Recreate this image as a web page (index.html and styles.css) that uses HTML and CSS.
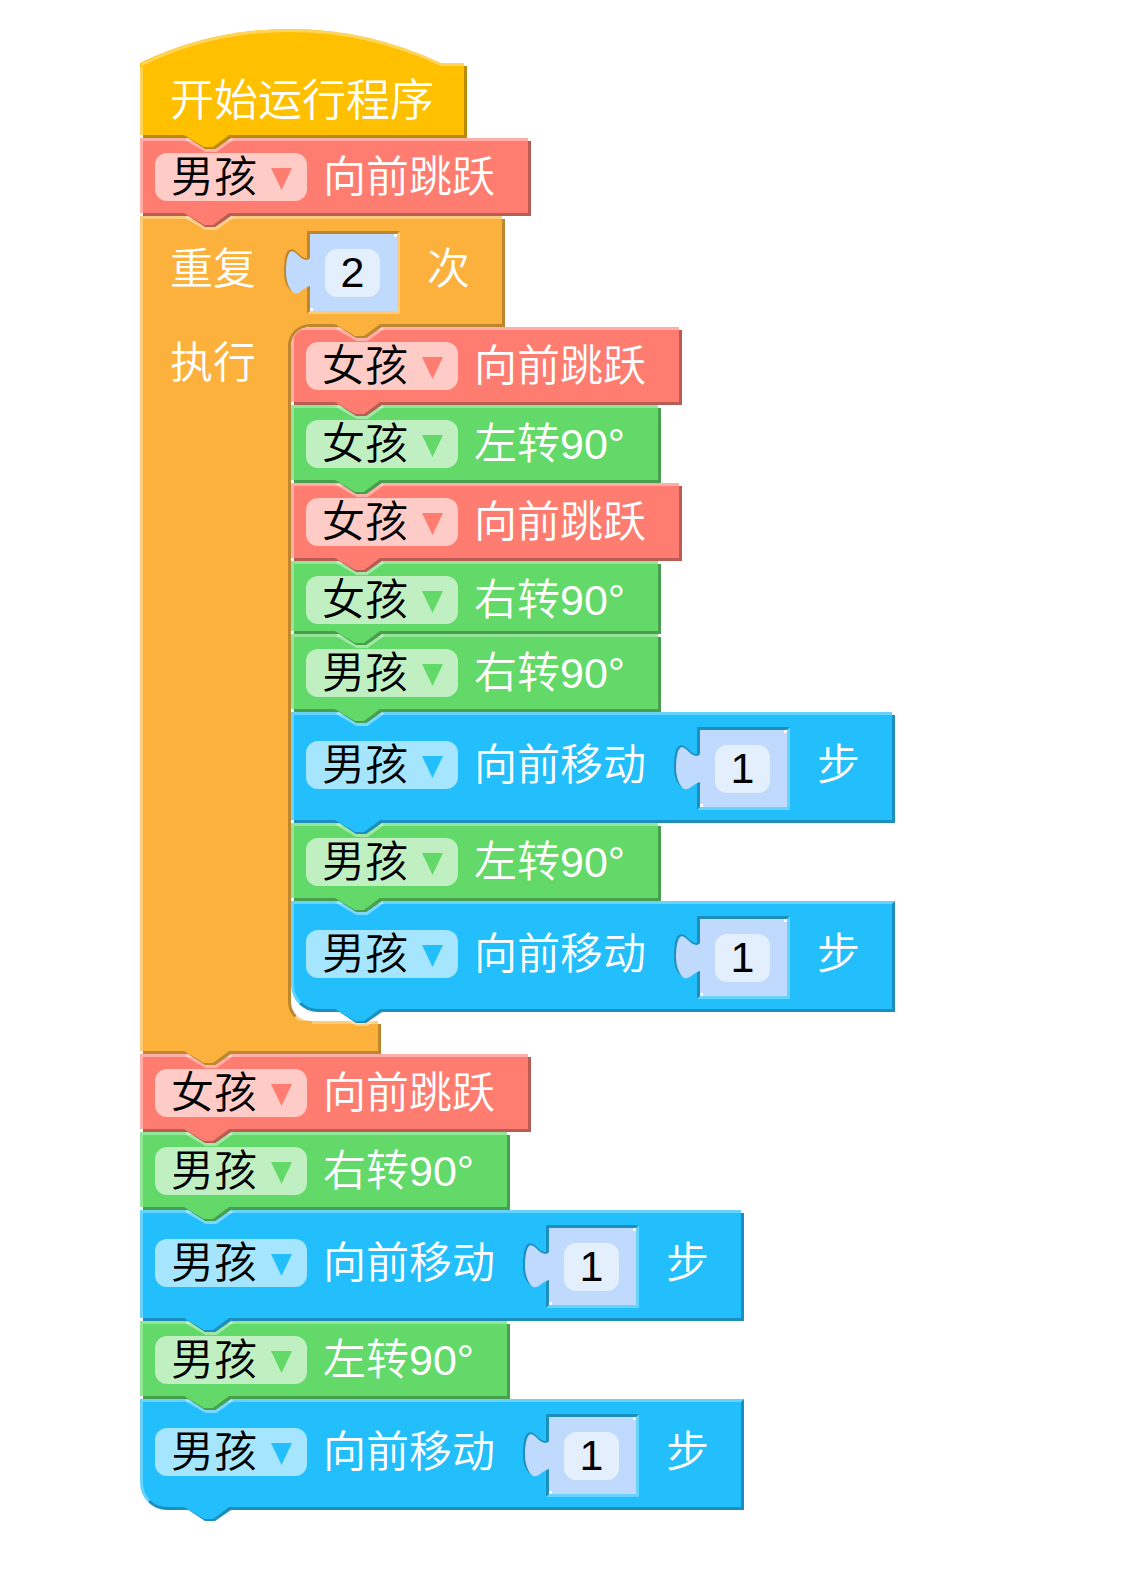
FILE: index.html
```html
<!DOCTYPE html>
<html lang="zh-CN">
<head>
<meta charset="utf-8">
<meta name="viewport" content="width=device-width, initial-scale=1">
<title>积木程序</title>
<link rel="stylesheet" href="styles.css">
</head>
<body>
<svg class="symbols" aria-hidden="true">
  <symbol id="tab" viewBox="0 0 52 20">
    <path d="M2 4 L22 15.500 H32 L48 4" fill="none" stroke="#fff" stroke-opacity=".4" stroke-width="3"/>
    <path d="M3 2 L21 14 H31 L47 3 V0 H3 Z" fill="var(--dark)"/>
    <path d="M0 0 L20 12 H29 L45 0 Z" fill="var(--fill)"/>
  </symbol>
  <symbol id="plug" viewBox="0 0 30 50">
    <path d="M27 10 C24 14 20 12 16 8 C12 4 9 2 6 4 C2 6 1 16 1 26 C1 36 4 42 9 45 L27 38 Z" fill="var(--dark)"/>
    <path d="M30 12 H27 C24 16 19 13 16 10 C12 6 9 4 7 6 C4 9 3 18 3 26 C3 38 8 45 11 47 C16 49 20 42 27 40 H30 Z" fill="#bfdafd"/>
  </symbol>
  <symbol id="arrow" viewBox="0 0 21 22"><path d="M0 0 H21 L10.500 22 Z" fill="var(--fill)"/></symbol>
</svg>

<main class="workspace">
  <div class="stack">
    <div class="hat yellow">
      <svg class="arch" viewBox="0 0 327 38" aria-hidden="true">
        <path d="M0 38 V34 Q70 0 150 0 Q228 0 300 34 V38 Z" fill="var(--fill)"/>
        <path d="M1 36 Q70 1.500 150 1.500 Q228 1.500 301 35.500" fill="none" stroke="var(--light)" stroke-width="3"/>
      </svg>
      <div class="block start"><span class="text">开始运行程序</span><svg class="tab"><use href="#tab"/></svg></div>
    </div>

    <div class="block pink">
      <span class="pick"><select aria-label="角色"><option>男孩</option></select><svg class="arrow"><use href="#arrow"/></svg></span>
      <span class="text">向前跳跃</span><svg class="tab"><use href="#tab"/></svg>
    </div>

    <div class="loop orange">
      <div class="block tall loop-head">
        <label class="text" for="times">重复</label>
        <span class="value"><svg class="plug"><use href="#plug"/></svg><input id="times" value="2"></span>
        <span class="text">次</span>
      </div>
      <div class="loop-body">
        <span class="text loop-do">执行</span>
        <div class="mouth">
          <svg class="tab top-tab"><use href="#tab"/></svg>
          <div class="stack">
            <div class="block pink first">
              <span class="pick"><select aria-label="角色"><option>女孩</option></select><svg class="arrow"><use href="#arrow"/></svg></span>
              <span class="text">向前跳跃</span><svg class="tab"><use href="#tab"/></svg>
            </div>
            <div class="block green">
              <span class="pick"><select aria-label="角色"><option>女孩</option></select><svg class="arrow"><use href="#arrow"/></svg></span>
              <span class="text">左转90°</span><svg class="tab"><use href="#tab"/></svg>
            </div>
            <div class="block pink">
              <span class="pick"><select aria-label="角色"><option>女孩</option></select><svg class="arrow"><use href="#arrow"/></svg></span>
              <span class="text">向前跳跃</span><svg class="tab"><use href="#tab"/></svg>
            </div>
            <div class="block green compact">
              <span class="pick"><select aria-label="角色"><option>女孩</option></select><svg class="arrow"><use href="#arrow"/></svg></span>
              <span class="text">右转90°</span><svg class="tab"><use href="#tab"/></svg>
            </div>
            <div class="block green">
              <span class="pick"><select aria-label="角色"><option>男孩</option></select><svg class="arrow"><use href="#arrow"/></svg></span>
              <span class="text">右转90°</span><svg class="tab"><use href="#tab"/></svg>
            </div>
            <div class="block blue tall">
              <span class="pick"><select aria-label="角色"><option>男孩</option></select><svg class="arrow"><use href="#arrow"/></svg></span>
              <label class="text" for="steps1">向前移动</label>
              <span class="value"><svg class="plug"><use href="#plug"/></svg><input id="steps1" value="1"></span>
              <span class="text">步</span><svg class="tab"><use href="#tab"/></svg>
            </div>
            <div class="block green">
              <span class="pick"><select aria-label="角色"><option>男孩</option></select><svg class="arrow"><use href="#arrow"/></svg></span>
              <span class="text">左转90°</span><svg class="tab"><use href="#tab"/></svg>
            </div>
            <div class="block blue tall last">
              <span class="pick"><select aria-label="角色"><option>男孩</option></select><svg class="arrow"><use href="#arrow"/></svg></span>
              <label class="text" for="steps2">向前移动</label>
              <span class="value"><svg class="plug"><use href="#plug"/></svg><input id="steps2" value="1"></span>
              <span class="text">步</span><svg class="tab"><use href="#tab"/></svg>
            </div>
          </div>
        </div>
      </div>
      <div class="block loop-foot"><svg class="tab"><use href="#tab"/></svg></div>
    </div>

    <div class="block pink">
      <span class="pick"><select aria-label="角色"><option>女孩</option></select><svg class="arrow"><use href="#arrow"/></svg></span>
      <span class="text">向前跳跃</span><svg class="tab"><use href="#tab"/></svg>
    </div>
    <div class="block green">
      <span class="pick"><select aria-label="角色"><option>男孩</option></select><svg class="arrow"><use href="#arrow"/></svg></span>
      <span class="text">右转90°</span><svg class="tab"><use href="#tab"/></svg>
    </div>
    <div class="block blue tall">
      <span class="pick"><select aria-label="角色"><option>男孩</option></select><svg class="arrow"><use href="#arrow"/></svg></span>
      <label class="text" for="steps3">向前移动</label>
      <span class="value"><svg class="plug"><use href="#plug"/></svg><input id="steps3" value="1"></span>
      <span class="text">步</span><svg class="tab"><use href="#tab"/></svg>
    </div>
    <div class="block green">
      <span class="pick"><select aria-label="角色"><option>男孩</option></select><svg class="arrow"><use href="#arrow"/></svg></span>
      <span class="text">左转90°</span><svg class="tab"><use href="#tab"/></svg>
    </div>
    <div class="block blue tall last">
      <span class="pick"><select aria-label="角色"><option>男孩</option></select><svg class="arrow"><use href="#arrow"/></svg></span>
      <label class="text" for="steps4">向前移动</label>
      <span class="value"><svg class="plug"><use href="#plug"/></svg><input id="steps4" value="1"></span>
      <span class="text">步</span><svg class="tab"><use href="#tab"/></svg>
    </div>
  </div>
</main>
</body>
</html>
```
FILE: styles.css
```css
* { box-sizing: border-box; }

body {
  margin: 0;
  background: #fff;
  color: #fff;
  font-family: "Liberation Sans", "Noto Sans CJK SC", sans-serif;
  font-size: 43px;
  font-weight: 350;
  line-height: 48px;
}

.symbols { position: absolute; width: 0; height: 0; }
.workspace { padding: 29px 24px 62px 140px; }

.stack {
  display: flex;
  flex-direction: column;
  align-items: flex-start;
}

.yellow { --fill: #ffc000; --light: #ffd45c; --dark: #b88b08; }
.pink   { --fill: #fe7d70; --light: #feaea6; --dark: #b95d54; }
.orange { --fill: #fcb13c; --light: #fdcb7c; --dark: #bd8730; }
.green  { --fill: #62d968; --light: #93e597; --dark: #489f4d; }
.blue   { --fill: #22bffc; --light: #66d3fd; --dark: #1c8fbe; }

/* bevelled block: light top and left edges, dark right and bottom edges */
.block {
  position: relative;
  display: flex;
  align-items: flex-start;
  gap: 16px;
  padding: 15px 36px 15px 15px;
  white-space: nowrap;
  background:
    linear-gradient(var(--light), var(--light)) 0 0 / calc(100% - 3px) 3px no-repeat,
    linear-gradient(var(--light), var(--light)) 0 0 / 3px calc(100% - 3px) no-repeat,
    linear-gradient(var(--dark), var(--dark)) 100% 100% / 3px calc(100% - 3px) no-repeat,
    linear-gradient(var(--dark), var(--dark)) 100% 100% / calc(100% - 3px) 3px no-repeat,
    linear-gradient(var(--fill), var(--fill)) 3px 3px / calc(100% - 6px) calc(100% - 6px) no-repeat;
}
.compact { padding-bottom: 10px; }
.tall { padding-right: 35px; padding-bottom: 13px; }
.tall > .pick, .tall > .text { margin-top: 14px; }
.text { display: block; }

.first { border-top-left-radius: 20px; }
.last {
  padding: 12px 32px 10px 12px;
  border: 3px solid;
  border-color: var(--light) var(--dark) var(--dark) var(--light);
  border-bottom-left-radius: 27px;
  background: var(--fill);
}

.tab {
  position: absolute;
  z-index: 1;
  left: 44px;
  top: calc(100% - 3px);
  width: 52px;
  height: 20px;
}
.last .tab { left: 41px; top: 100%; }

.hat { position: relative; padding-top: 34px; }
.arch { position: absolute; z-index: 1; left: 0; top: 0; width: 327px; height: 38px; }
.start { padding: 14px 33px 13px 30px; font-size: 44px; }

.pick { position: relative; }
.pick select {
  display: block;
  width: 152px;
  height: 48px;
  margin: 0;
  padding: 0 0 4px 16px;
  border: 0;
  border-radius: 12px;
  appearance: none;
  background: rgba(255, 255, 255, .6);
  color: #000;
  font: inherit;
}
.arrow {
  position: absolute;
  right: 15px;
  top: 15px;
  width: 21px;
  height: 22px;
  pointer-events: none;
}

.value {
  position: relative;
  margin: 0 11px 0 35px;
  padding: 15px 17px 14px 15px;
  border: 3px solid;
  border-color: var(--dark) var(--light) var(--light) var(--dark);
  background:
    linear-gradient(#fff, #fff) 100% 0 / 3px 3px no-repeat,
    linear-gradient(#fff, #fff) 0 100% / 3px 3px no-repeat,
    #bfdafd;
}
.value input {
  display: block;
  width: 55px;
  height: 48px;
  padding: 0 0 2px;
  border: 0;
  border-radius: 12px;
  background: #e4effe;
  color: #000;
  font: inherit;
  text-align: center;
}
.plug { position: absolute; left: -27px; top: 12px; width: 30px; height: 50px; }

/* C-shaped loop: head, arm with an open mouth, foot */
.loop-head {
  padding-left: 30px;
  width: max-content;
  background:
    linear-gradient(var(--light), var(--light)) 0 0 / calc(100% - 3px) 3px no-repeat,
    linear-gradient(var(--light), var(--light)) 0 0 / 3px 100% no-repeat,
    linear-gradient(var(--dark), var(--dark)) 100% 100% / 3px calc(100% - 3px) no-repeat,
    linear-gradient(var(--dark), var(--dark)) 100% 100% / calc(100% - 170px) 3px no-repeat,
    linear-gradient(var(--fill), var(--fill)) 3px 3px / calc(100% - 6px) calc(100% - 3px) no-repeat;
}
.loop-body {
  display: flex;
  background:
    linear-gradient(var(--light), var(--light)) 0 0 / 3px 100% no-repeat,
    linear-gradient(var(--fill), var(--fill)) 0 0 / 178px 100% no-repeat;
}
.loop-do { width: 148px; padding: 12px 0 0 30px; }
.mouth {
  position: relative;
  padding: 0 0 9px 3px;
  border-radius: 20px 0 0 22px;
  background: linear-gradient(var(--dark), var(--dark)) 0 0 / 3px 100% no-repeat, #fff;
}
.mouth::before, .mouth::after {
  content: "";
  position: absolute;
  left: 0;
  width: 24px;
  height: 24px;
  border: 0 solid var(--dark);
  border-left-width: 3px;
}
.mouth::before { top: -3px; border-top-width: 3px; border-top-left-radius: 22px; }
.mouth::after {
  bottom: -3px;
  border-bottom: 3px solid var(--light);
  border-bottom-left-radius: 22px;
}
.top-tab { left: 47px; top: -3px; }

.loop-foot {
  width: 241px;
  height: 33px;
  padding: 0;
  background:
    linear-gradient(var(--light), var(--light)) 172px 0 / 66px 3px no-repeat,
    linear-gradient(var(--light), var(--light)) 0 0 / 3px calc(100% - 3px) no-repeat,
    linear-gradient(var(--dark), var(--dark)) 100% 100% / 3px calc(100% - 3px) no-repeat,
    linear-gradient(var(--dark), var(--dark)) 100% 100% / calc(100% - 3px) 3px no-repeat,
    linear-gradient(var(--fill), var(--fill)) 3px 0 / calc(100% - 6px) calc(100% - 3px) no-repeat;
}
```
